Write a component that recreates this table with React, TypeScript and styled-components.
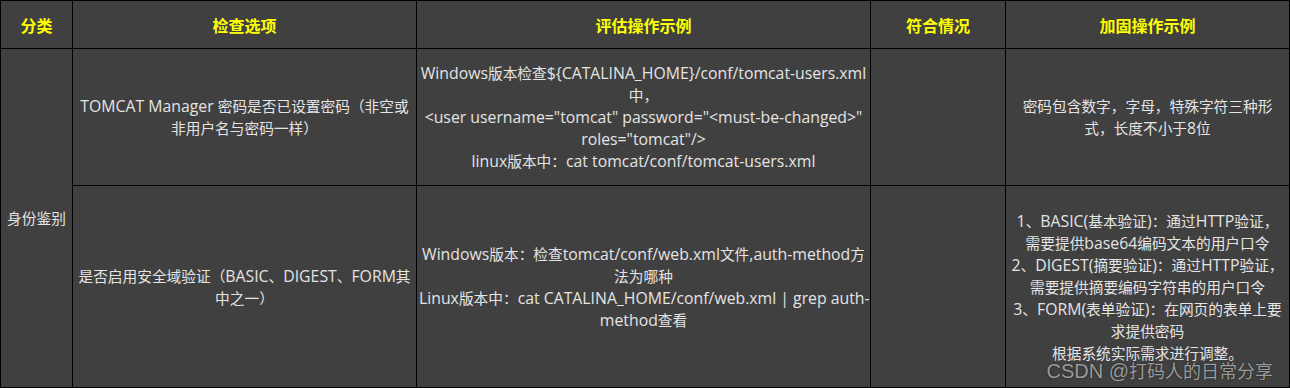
import React from 'react'
import styled, { createGlobalStyle } from 'styled-components'

const GlobalStyle = createGlobalStyle`
  html, body {
    margin: 0;
    padding: 0;
    background: #404040;
  }
  body {
    font-family: "Open Sans", "Noto Sans CJK SC", sans-serif;
  }
`

const Sheet = styled.div`
  position: relative;
  width: 1290px;
  height: 388px;
  overflow: hidden;
`

const Table = styled.table`
  width: 1289px;
  border-collapse: collapse;
  table-layout: fixed;
  background: #404040;
`

const HeadCell = styled.th`
  height: 47px;
  padding: 0;
  border: 1px solid #000;
  color: #ffff00;
  font-size: 16px;
  font-weight: 700;
  text-align: center;
  vertical-align: middle;
`

const Cell = styled.td<{ $h?: number }>`
  height: ${(p) => (p.$h ? `${p.$h}px` : 'auto')};
  padding: 0 2px;
  border: 1px solid #000;
  color: #e4e4e4;
  font-size: 15.8px;
  line-height: 22px;
  text-align: center;
  vertical-align: middle;
  white-space: nowrap;
`

// CJK runs are set smaller than the latin runs, as in the sheet
const Han = styled.span<{ $size?: number }>`
  font-family: "Noto Sans CJK SC", sans-serif;
  font-size: ${(p) => p.$size || 14.7}px;
`

const Watermark = styled.div`
  position: absolute;
  right: 17px;
  bottom: 6px;
  font-family: "Liberation Sans", "Noto Sans CJK SC", sans-serif;
  font-size: 20px;
  line-height: 22px;
  color: rgba(200, 200, 200, 0.72);
  text-shadow: 0 0 2px rgba(0, 0, 0, 0.6);
  white-space: nowrap;
`

const HAN_RE = /([\u2E80-\u9FFF\u3000-\u303F\uFF00-\uFFEF]+)/

const mixed = (text: string, size?: number) =>
  text.split(HAN_RE).map((part, i) =>
    i % 2 === 1 ? (
      <Han key={i} $size={size}>
        {part}
      </Han>
    ) : (
      part
    ),
  )

const lines = (arr: string[]) =>
  arr.map((l, i) => (
    <React.Fragment key={i}>
      {i > 0 && <br />}
      {mixed(l)}
    </React.Fragment>
  ))

export default function App() {
  return (
    <>
      <GlobalStyle />
      <Sheet>
        <Table>
          <colgroup>
            <col style={{ width: 72 }} />
            <col style={{ width: 344 }} />
            <col style={{ width: 454 }} />
            <col style={{ width: 135 }} />
            <col style={{ width: 284 }} />
          </colgroup>
          <thead>
            <tr>
              <HeadCell>分类</HeadCell>
              <HeadCell>检查选项</HeadCell>
              <HeadCell>评估操作示例</HeadCell>
              <HeadCell>符合情况</HeadCell>
              <HeadCell>加固操作示例</HeadCell>
            </tr>
          </thead>
          <tbody>
            <tr>
              <Cell rowSpan={2}>{lines(['身份鉴别'])}</Cell>
              <Cell $h={136}>
                {lines(['TOMCAT Manager 密码是否已设置密码（非空或', '非用户名与密码一样）'])}
              </Cell>
              <Cell>
                {lines([
                  'Windows版本检查${CATALINA_HOME}/conf/tomcat-users.xml',
                  '中，',
                  '<user username="tomcat" password="<must-be-changed>"',
                  'roles="tomcat"/>',
                  'linux版本中：cat tomcat/conf/tomcat-users.xml',
                ])}
              </Cell>
              <Cell />
              <Cell>{lines(['密码包含数字，字母，特殊字符三种形', '式，长度不小于8位'])}</Cell>
            </tr>
            <tr>
              <Cell $h={201}>
                {lines(['是否启用安全域验证（BASIC、DIGEST、FORM其', '中之一）'])}
              </Cell>
              <Cell>
                {lines([
                  'Windows版本：检查tomcat/conf/web.xml文件,auth-method方',
                  '法为哪种',
                  'Linux版本中：cat CATALINA_HOME/conf/web.xml | grep auth-',
                  'method查看',
                ])}
              </Cell>
              <Cell />
              <Cell>
                {lines([
                  '1、BASIC(基本验证)：通过HTTP验证，',
                  '需要提供base64编码文本的用户口令',
                  '2、DIGEST(摘要验证)：通过HTTP验证，',
                  '需要提供摘要编码字符串的用户口令',
                  '3、FORM(表单验证)：在网页的表单上要',
                  '求提供密码',
                  '根据系统实际需求进行调整。',
                ])}
              </Cell>
            </tr>
          </tbody>
        </Table>
        <Watermark>{mixed('CSDN @打码人的日常分享', 18)}</Watermark>
      </Sheet>
    </>
  )
}
